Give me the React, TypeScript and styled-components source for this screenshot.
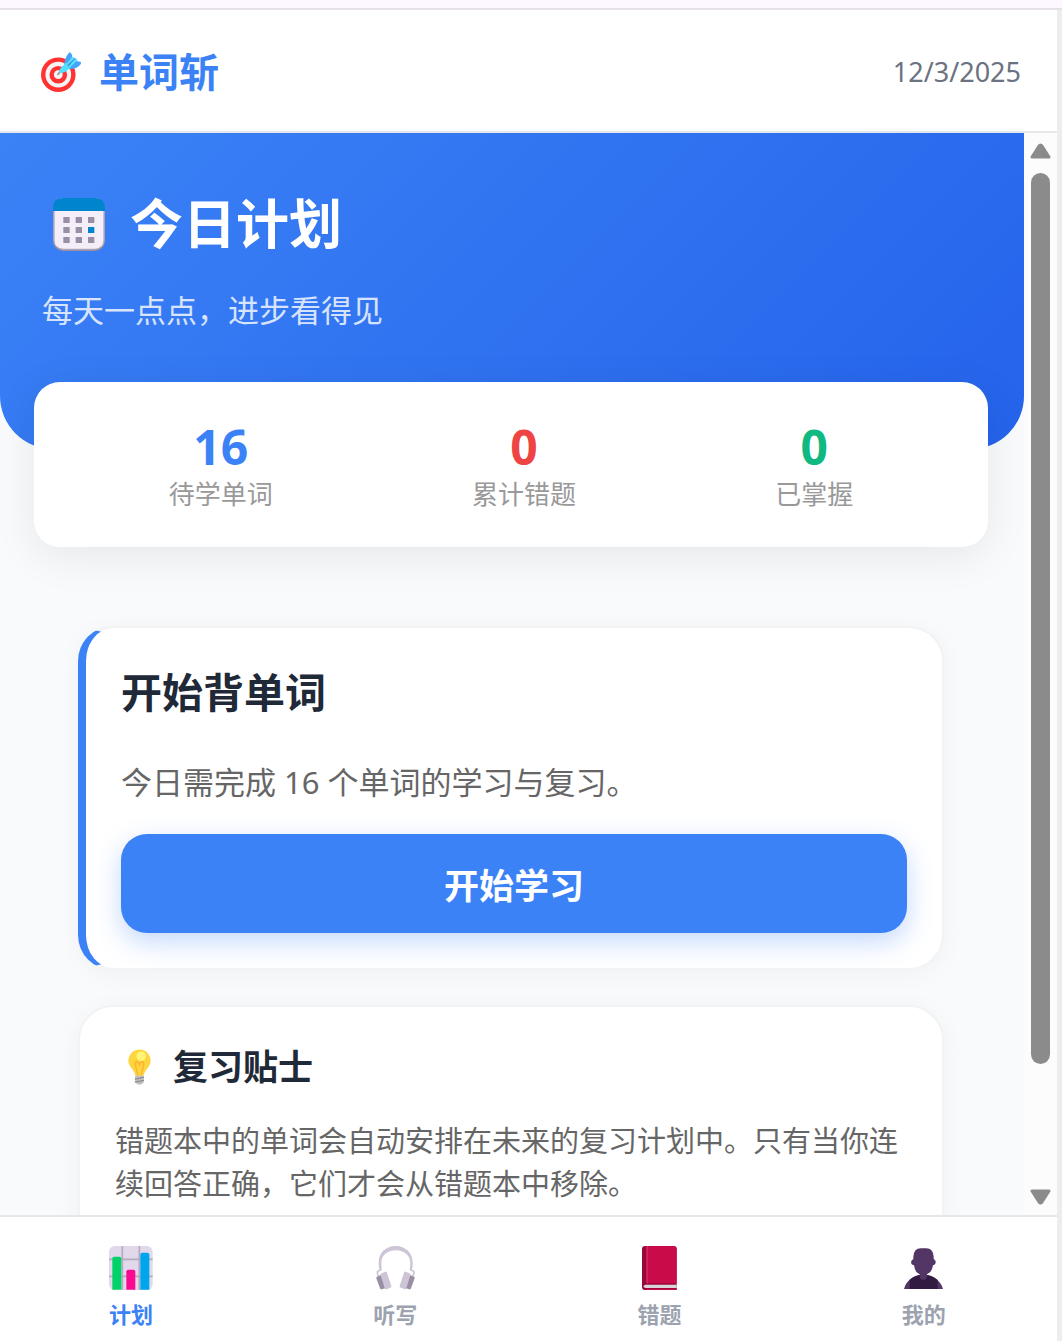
import React, { useRef } from "react";
import styled, { createGlobalStyle } from "styled-components";

const GlobalStyle = createGlobalStyle`
  *, *::before, *::after { box-sizing: border-box; }
  body {
    margin: 0;
    background: #ededf0;
    color: #1f2937;
    font-family: "Noto Sans", "Noto Sans CJK SC", sans-serif;
  }
  h1, h2, h3, p, dl, dt, dd { margin: 0; }
  button { font-family: inherit; border: 0; padding: 0; cursor: pointer; }
`;

const Page = styled.div`
  display: flex;
  flex-direction: column;
  height: 100vh;
`;

const TopStrip = styled.div`
  flex: none;
  height: 10px;
  background: #fdf7ff;
  border-bottom: 2px solid #e6e0e9;
`;

const Shell = styled.div`
  flex: 1;
  min-height: 0;
  display: flex;
  flex-direction: column;
  margin-right: 5px;
  background: #ffffff;
`;

const Header = styled.header`
  flex: none;
  display: flex;
  align-items: center;
  justify-content: space-between;
  padding: 33px 36px 31px;
  border-bottom: 2px solid #e5e7eb;
`;

const Brand = styled.h1`
  display: flex;
  align-items: center;
  gap: 13px;
  font-size: 40px;
  line-height: 57px;
  font-weight: 700;
  color: #3b82f6;
`;

const Today = styled.time`
  font-size: 27px;
  line-height: 38px;
  color: #6b7280;
`;

const EmojiBox = styled.span<{ $width: number }>`
  flex: none;
  display: flex;
  justify-content: center;
  width: ${(p) => p.$width}px;
`;

const Body = styled.div`
  flex: 1;
  min-height: 0;
  display: flex;
`;

const ScrollArea = styled.main`
  flex: 1;
  min-width: 0;
  overflow-y: auto;
  scrollbar-width: none;
  background: #f9fafc;
`;

const ScrollRail = styled.div`
  flex: none;
  display: flex;
  flex-direction: column;
  align-items: center;
  width: 33px;
  background: #fcfcfc;
`;

const ScrollButton = styled.button`
  flex: none;
  display: flex;
  align-items: center;
  justify-content: center;
  width: 33px;
  height: 36px;
  background: transparent;
`;

const Track = styled.div`
  flex: 1;
  display: flex;
  flex-direction: column;
  width: 19px;
  padding-top: 4px;
`;

const Thumb = styled.div`
  flex: 0 0 calc(100% - 115px);
  border-radius: 10px;
  background: #8b8b8b;
`;

const Hero = styled.section`
  padding: 53px 42px 116px;
  border-radius: 0 0 53px 53px;
  background: linear-gradient(135deg, #3b82f6, #2563eb);
  color: #ffffff;
`;

const HeroTitle = styled.h2`
  display: flex;
  align-items: center;
  gap: 14px;
  font-size: 53px;
  line-height: 76px;
  font-weight: 700;
`;

const HeroText = styled.p`
  margin-top: 25px;
  font-size: 31px;
  line-height: 46px;
  opacity: 0.8;
`;

const Stats = styled.dl`
  position: relative;
  display: flex;
  justify-content: space-around;
  margin: -67px 36px 0 34px;
  padding: 35px;
  border-radius: 26px;
  background: #ffffff;
  box-shadow: 0 9px 44px rgba(0, 0, 0, 0.08);
`;

const Stat = styled.div`
  display: flex;
  flex-direction: column-reverse;
  align-items: center;
`;

const StatValue = styled.dd<{ $color: string }>`
  font-size: 48px;
  line-height: 60px;
  font-weight: 700;
  color: ${(p) => p.$color};
`;

const StatLabel = styled.dt`
  font-size: 26px;
  line-height: 35px;
  color: #999999;
`;

const Cards = styled.div`
  display: flex;
  flex-direction: column;
  gap: 35px;
  padding: 79px 80px 79px 78px;
`;

const Card = styled.section<{ $accent?: boolean }>`
  padding: 35px;
  border: 2px solid #f2f3f5;
  ${(p) => p.$accent && "border-left: 8px solid #3b82f6;"}
  border-radius: 35px;
  background: #ffffff;
  box-shadow: 0 4px 26px rgba(0, 0, 0, 0.04);
`;

const CardTitle = styled.h3`
  font-size: 41px;
  line-height: 58px;
  font-weight: 700;
`;

const CardText = styled.p`
  margin-top: 38px;
  font-size: 31px;
  line-height: 46px;
  color: #666666;
`;

const StartButton = styled.button`
  display: block;
  width: 100%;
  height: 99px;
  margin-top: 29px;
  border-radius: 26px;
  background: #3b82f6;
  box-shadow: 0 9px 26px rgba(59, 130, 246, 0.3);
  color: #ffffff;
  font-size: 35px;
  font-weight: 700;
`;

const TipTitle = styled.h3`
  display: flex;
  align-items: center;
  gap: 10px;
  font-size: 35px;
  line-height: 50px;
  font-weight: 700;
`;

const TipText = styled.p`
  margin: 27px 0;
  font-size: 29px;
  line-height: 43px;
  color: #666666;
`;

const TabBar = styled.nav`
  flex: none;
  display: grid;
  grid-template-columns: repeat(4, 1fr);
  border-top: 2px solid #e5e7eb;
  background: #ffffff;
`;

const Tab = styled.button<{ $active?: boolean }>`
  display: flex;
  flex-direction: column;
  align-items: center;
  gap: 9px;
  padding: 29px 2px 12px 0;
  background: transparent;
  color: ${(p) => (p.$active ? "#3b82f6" : "#9ca3af")};
  font-size: 22px;
  line-height: 30px;
  font-weight: 700;
`;

const TabIcon = styled.span`
  display: flex;
  align-items: center;
  height: 44px;
`;

const TargetIcon = () => (
  <svg width="40" height="40" viewBox="0 0 118 118" aria-hidden="true">
    <circle cx="51" cy="67" r="51" fill="#ff3131" />
    <circle cx="51" cy="67" r="38" fill="#f4f4f4" />
    <circle cx="51" cy="67" r="26" fill="#ff3131" />
    <circle cx="51" cy="67" r="13" fill="#f4f4f4" />
    <path d="M50 66L62 52" stroke="#9b9b9b" strokeWidth="5" strokeLinecap="round" />
    <path d="M69 38C68 24 75 10 85 0L92 8L91 20L83 36L74 44ZM80 47L99 26L116 29Q120 31 117 36C109 46 98 50 86 51Z" fill="#46a4fb" />
    <path d="M54 58Q54 48 72 34L76 31L87 42L84 48Q72 61 60 62Q53 63 54 58Z" fill="#50e2ff" />
    <path d="M76 39L94 17M82 45L104 23" stroke="#50e2ff" strokeWidth="6" strokeLinecap="round" />
    <path d="M80 40L100 19" stroke="#3295ea" strokeWidth="4" strokeLinecap="round" />
  </svg>
);

const CalendarIcon = () => (
  <svg width="52" height="53" viewBox="0 0 156 159" aria-hidden="true">
    <rect width="156" height="159" rx="30" fill="#998ea4" />
    <rect x="1" width="154" height="155" rx="29" fill="#b4acbc" />
    <path d="M5 30H151V126Q151 152 125 152H31Q5 152 5 126Z" fill="#f3eef8" />
    <path d="M0 39V30Q0 0 30 0H126Q156 0 156 30V39Z" fill="#0084ce" />
    {[57, 87, 117].map((y, row) =>
      [31, 68, 105].map((x, col) => (
        <rect key={`${x}-${y}`} x={x} y={y} width="19" height="18" rx="1" fill={row === 1 && col === 2 ? "#0084ce" : "#998ea4"} />
      ))
    )}
  </svg>
);

const BulbIcon = () => (
  <svg width="23" height="36" viewBox="0 0 68 106" aria-hidden="true">
    <path d="M34 1A33 33 0 0 0 8 54C16 63 20 70 22 79H46C48 70 52 63 60 54A33 33 0 0 0 34 1Z" fill="#fcd53f" />
    <circle cx="39" cy="21" r="14" fill="#fff478" />
    <path d="M29 79C28 62 19 50 22 41C26 32 35 42 34 50C33 42 42 32 46 41C49 50 40 62 39 79" fill="none" stroke="#ffb02e" strokeWidth="4" />
    <path d="M21 79H47V98L39 105H29L21 98Z" fill="#bebebe" />
    <path d="M20 89L47 83M20 98L47 92" stroke="#858585" strokeWidth="3" />
  </svg>
);

const ChartIcon = () => (
  <svg width="44" height="44" viewBox="0 0 132 132" aria-hidden="true">
    <rect width="131" height="132" rx="17" fill="#e1d8ec" />
    <path d="M40 0V132M91 0V132M0 40H131M0 91H131" stroke="#b4acbc" strokeWidth="5" />
    <path d="M10 131V38Q10 32 16 32H31Q37 32 37 38V131Z" fill="#00d26a" />
    <path d="M52 131V77Q52 71 58 71H73Q79 71 79 77V131Z" fill="#fb0a91" />
    <path d="M94 131V26Q94 20 100 20H115Q121 20 121 26V131Z" fill="#00a6ed" />
  </svg>
);

const HeadphonesIcon = () => (
  <svg width="39" height="44" viewBox="0 0 117 132" aria-hidden="true">
    <path d="M11 72C8 62 8 55 8 50C8 20 30 0 59 0C88 0 110 20 110 50C110 58 110 64 107 72L101 70C103 62 103 56 103 50C103 28 84 13 59 13C34 13 16 28 16 50C16 58 16 64 18 70Z" fill="#cdc4d6" />
    <path d="M14 68Q15 73 9 74Q2 76 5 84L8 92M104 68Q103 73 109 74Q116 76 113 84L110 92" fill="none" stroke="#cdc4d6" strokeWidth="5" />
    <path d="M3 92L15 87L30 126L17 130Q13 131 12 127L1 97Q0 93 3 92ZM114 92L102 87L87 126L100 130Q104 131 105 127L116 97Q117 93 114 92Z" fill="#998ea4" />
    <path d="M17 82L28 77Q32 76 33 80L46 120Q47 124 43 125L31 130Q27 131 26 127L14 87Q13 83 17 82ZM100 82L89 77Q85 76 84 80L71 120Q70 124 74 125L86 130Q90 131 91 127L103 87Q104 83 100 82Z" fill="#cdc4d6" />
  </svg>
);

const BookIcon = () => (
  <svg width="35" height="44" viewBox="0 0 105 132" aria-hidden="true">
    <path d="M10 0H94Q104 0 104 10V132H10Q0 132 0 122V10Q0 0 10 0Z" fill="#990838" />
    <path d="M14 0H94Q104 0 104 10V112H14Z" fill="#ca0b4a" />
    <path d="M15 1V112" stroke="#ef5b8c" strokeWidth="2" />
    <path d="M104 116H11Q5 116 5 121Q5 126 11 126H104Z" fill="#d9d4dc" />
    <path d="M11 130H104" stroke="#ca0b4a" strokeWidth="3" />
  </svg>
);

const PersonIcon = () => (
  <svg width="39" height="41" viewBox="0 0 117 123" aria-hidden="true">
    <path d="M0 123C6 98 28 80 58 80S110 98 117 123Z" fill="#533566" />
    <path d="M17 123V96Q34 80 58 80T101 96V123Z" fill="#321b41" />
    <path d="M47 70H69V84Q69 95 58 95T47 84Z" fill="#533566" />
    <path d="M28 33V26Q30 1 50 1H67Q87 1 89 26V33Q96 36 95 44Q94 51 87 52Q85 66 78 73Q70 81 58 81T38 73Q32 66 30 52Q22 51 21 44Q21 36 28 33Z" fill="#533566" />
  </svg>
);

const Arrow = ({ down }: { down?: boolean }) => (
  <svg width="21" height="16" viewBox="0 0 21 16" aria-hidden="true">
    <path
      d={down ? "M2 2H19L12 13Q10.500 15 9 13Z" : "M2 14H19L12 3Q10.500 1 9 3Z"}
      fill="#8b8b8b"
      stroke="#8b8b8b"
      strokeWidth="3"
      strokeLinejoin="round"
    />
  </svg>
);

const stats = [
  { label: "待学单词", value: 16, color: "#3b82f6" },
  { label: "累计错题", value: 0, color: "#ef4444" },
  { label: "已掌握", value: 0, color: "#10b981" },
];

const tabs = [
  { label: "计划", icon: <ChartIcon /> },
  { label: "听写", icon: <HeadphonesIcon /> },
  { label: "错题", icon: <BookIcon /> },
  { label: "我的", icon: <PersonIcon /> },
];

export default function App() {
  const area = useRef<HTMLElement>(null);
  const scroll = (top: number) => area.current?.scrollBy({ top, behavior: "smooth" });

  return (
    <>
      <GlobalStyle />
      <Page>
        <TopStrip />
        <Shell>
          <Header>
            <Brand>
              <EmojiBox $width={50}><TargetIcon /></EmojiBox>
              单词斩
            </Brand>
            <Today dateTime="2025-12-03">12/3/2025</Today>
          </Header>
          <Body>
            <ScrollArea ref={area}>
              <Hero>
                <HeroTitle>
                  <EmojiBox $width={74}><CalendarIcon /></EmojiBox>
                  今日计划
                </HeroTitle>
                <HeroText>每天一点点，进步看得见</HeroText>
              </Hero>
              <Stats>
                {stats.map((s) => (
                  <Stat key={s.label}>
                    <StatLabel>{s.label}</StatLabel>
                    <StatValue $color={s.color}>{s.value}</StatValue>
                  </Stat>
                ))}
              </Stats>
              <Cards>
                <Card $accent>
                  <CardTitle>开始背单词</CardTitle>
                  <CardText>今日需完成 16 个单词的学习与复习。</CardText>
                  <StartButton type="button">开始学习</StartButton>
                </Card>
                <Card>
                  <TipTitle>
                    <EmojiBox $width={48}><BulbIcon /></EmojiBox>
                    复习贴士
                  </TipTitle>
                  <TipText>
                    错题本中的单词会自动安排在未来的复习计划中。只有当你连续回答正确，它们才会从错题本中移除。
                  </TipText>
                </Card>
              </Cards>
            </ScrollArea>
            <ScrollRail>
              <ScrollButton type="button" aria-label="向上滚动" onClick={() => scroll(-80)}>
                <Arrow />
              </ScrollButton>
              <Track><Thumb /></Track>
              <ScrollButton type="button" aria-label="向下滚动" onClick={() => scroll(80)}>
                <Arrow down />
              </ScrollButton>
            </ScrollRail>
          </Body>
          <TabBar>
            {tabs.map((t, i) => (
              <Tab key={t.label} type="button" $active={i === 0} aria-current={i === 0 ? "page" : undefined}>
                <TabIcon>{t.icon}</TabIcon>
                {t.label}
              </Tab>
            ))}
          </TabBar>
        </Shell>
      </Page>
    </>
  );
}
